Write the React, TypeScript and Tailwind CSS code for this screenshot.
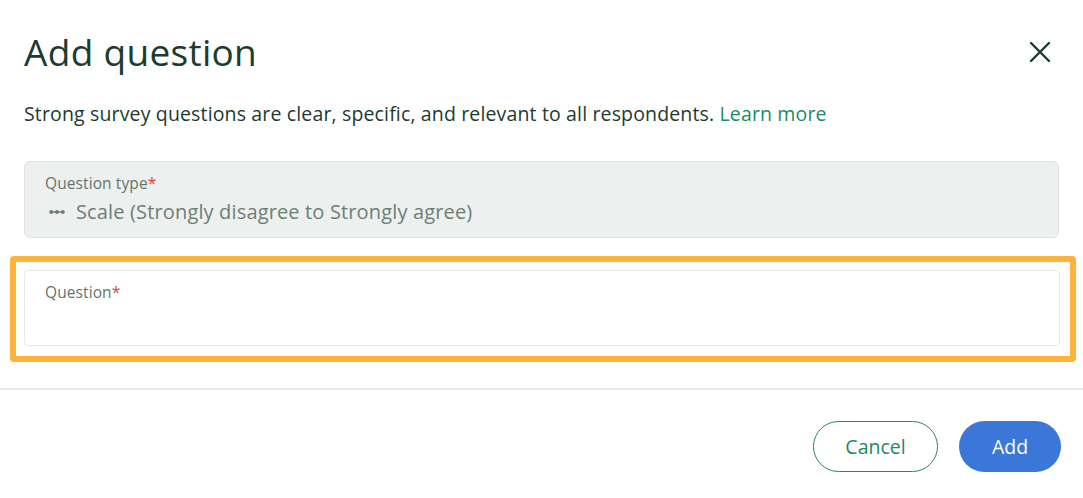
import React from "react";

export default function App() {
  return (
    <div
      className="w-[1083px] h-[498px] bg-white overflow-hidden flex flex-col"
      style={{ fontFamily: '"Open Sans", "Noto Sans", sans-serif' }}
    >
      {/* Header */}
      <div className="mt-[26px] h-[52px] flex items-center justify-between pl-6 pr-[32px]">
        <h1 className="text-[37px] leading-[52px] tracking-[0.3px] text-[#1b3c30] font-normal">Add question</h1>
        <button className="w-[22px] h-[22px] flex items-center justify-center">
          <svg width="22" height="22" viewBox="0 0 22 22" fill="none">
            <path d="M2 2L20 20M20 2L2 20" stroke="#1b3c30" strokeWidth="2.4" strokeLinecap="round" />
          </svg>
        </button>
      </div>

      {/* Description */}
      <p className="mt-[22px] px-6 text-[19.5px] leading-[28px] tracking-[0.15px] text-[#1e3a2f]">
        Strong survey questions are clear, specific, and relevant to all respondents.{" "}
        <span className="text-[#1d8a64]">Learn more</span>
      </p>

      {/* Question type (disabled) */}
      <div className="mt-[33px] mx-6 h-[77px] rounded-[6px] border border-[#dfe3e1] bg-[#eef0ef] px-5 pt-[10px]">
        <div className="text-[15.5px] leading-[22px] tracking-[0.1px] text-[#62756c]">
          Question type<span className="text-[#e0453b]">*</span>
        </div>
        <div className="mt-[5px] flex items-center gap-[11px] text-[20px] leading-[26px] tracking-[0.15px] text-[#6c7f76]">
          <svg className="ml-[4px]" width="16" height="6" viewBox="0 0 16 6">
            <line x1="2" y1="3" x2="14" y2="3" stroke="#6c7f76" strokeWidth="1.4" />
            <circle cx="2.2" cy="3" r="2" fill="#6c7f76" />
            <circle cx="8" cy="3" r="2" fill="#6c7f76" />
            <circle cx="13.8" cy="3" r="2" fill="#6c7f76" />
          </svg>
          <span>Scale (Strongly disagree to Strongly agree)</span>
        </div>
      </div>

      {/* Highlighted question field */}
      <div className="mt-[18px] ml-[10px] mr-[7px] h-[106px] rounded-[4px] border-[6px] border-[#fdb43c] pl-[8px] pr-[10px] pt-[8px]">
        <div className="h-[76px] rounded-[4px] border border-[#e8eae9] bg-white px-5 pt-[10px]">
          <div className="text-[15.5px] leading-[22px] tracking-[0.1px] text-[#62756c]">
            Question<span className="text-[#e0453b]">*</span>
          </div>
        </div>
      </div>

      {/* Divider */}
      <div className="mt-[26px] h-[2px] bg-[#e7e9e8]" />

      {/* Footer buttons */}
      <div className="mt-[31px] flex justify-end gap-[21px] pr-[22px]">
        <button className="w-[125px] h-[51px] rounded-full border-[1.5px] border-[#1d8a64] text-[19.5px] text-[#1d8a64] bg-white">
          Cancel
        </button>
        <button className="w-[102px] h-[51px] rounded-full bg-[#3a77d8] text-[19.5px] text-white">
          Add
        </button>
      </div>
    </div>
  );
}
